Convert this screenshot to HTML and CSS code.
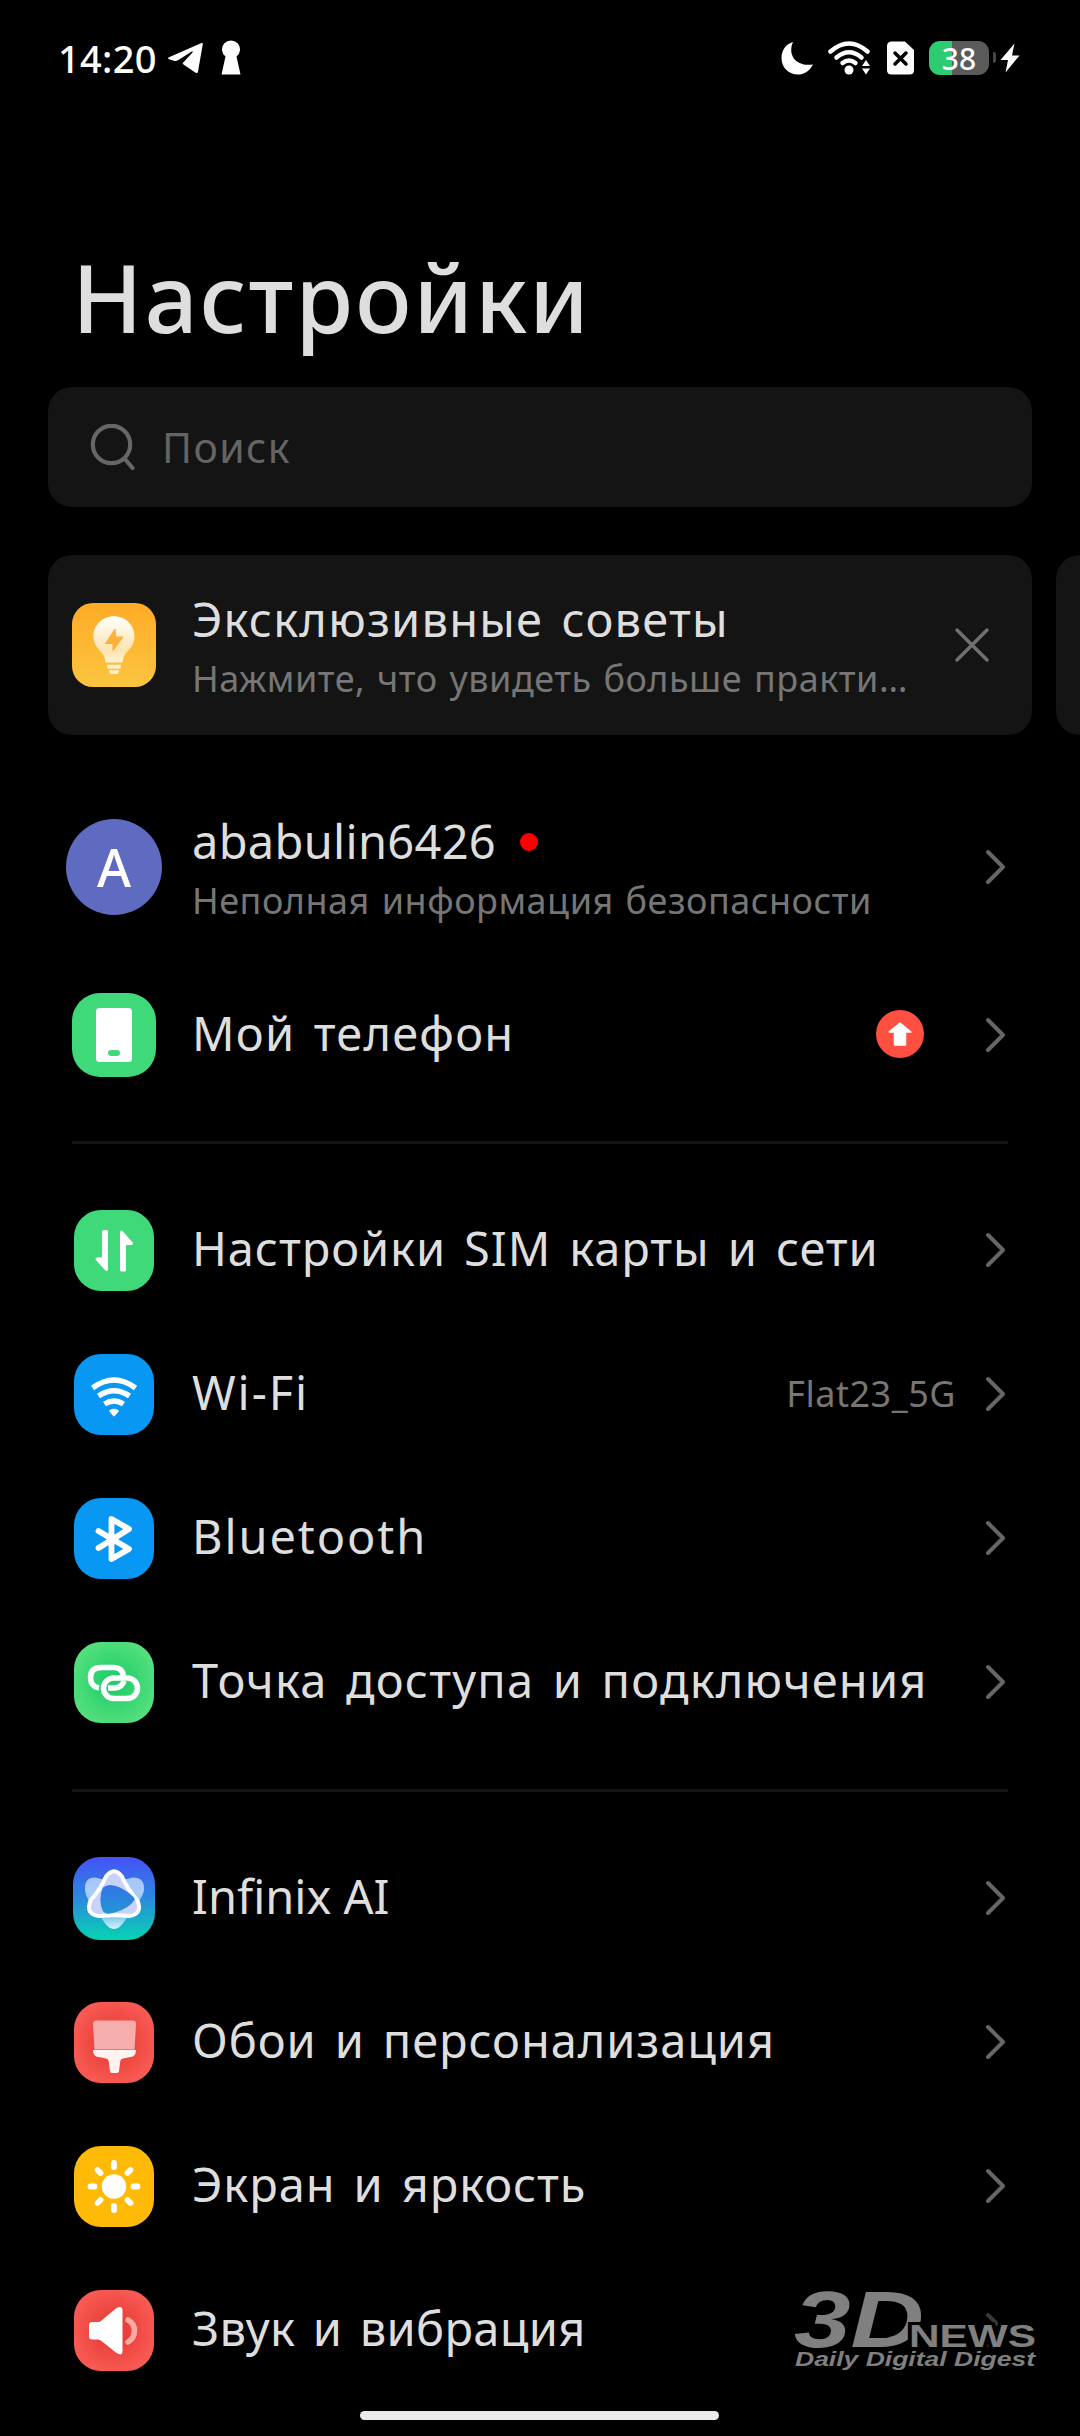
FILE: index.html
```html
<!doctype html>
<html lang="ru">
<head>
<meta charset="utf-8">
<meta name="viewport" content="width=device-width,user-scalable=no" />
<title>Настройки</title>
<link rel="stylesheet" href="styles.css">
</head>
<body>
<svg width="0" height="0" class="defs">
	<defs>
		<symbol id="arrow" viewBox="0 0 24 36"><path d="M4 3l15 15L4 33" fill="none" stroke="#666" stroke-width="4" stroke-linecap="round" stroke-linejoin="round"/></symbol>
		<linearGradient id="bulb" x1="0" y1="0" x2="0" y2="1"><stop offset="0" stop-color="#fff"/><stop offset=".75" stop-color="#fee3ad"/><stop offset="1" stop-color="#fff3d8"/></linearGradient>
		<linearGradient id="petal" x1="0" y1="0" x2="0" y2="1"><stop offset="0" stop-color="#a9c3fa"/><stop offset=".3" stop-color="#a8cdf6"/><stop offset=".75" stop-color="#7fc4ec"/><stop offset="1" stop-color="#d3f5f5"/></linearGradient>
		<linearGradient id="hole" x1="0" y1="0" x2="0" y2="1"><stop offset="0" stop-color="#3373e6"/><stop offset="1" stop-color="#2397d3"/></linearGradient>
	</defs>
</svg>
<div id="wrap">
	<div class="status">
		<span class="time">14:20</span>
		<svg class="tg" width="36" height="32" viewBox="0 0 36 32"><path d="M34.500 1C35.300.7 36 1.400 35.800 2.300L31 29.400C30.800 31 29.500 31.300 28.200 30.400L16.500 22.600C15.500 21.900 15.500 21.400 16.300 20.500L25.500 10.500C26.200 9.700 25.500 9 24.400 9.700L11 18.300C9.500 19.200 8.200 19.300 6.800 18.800L2 17.200C.8 16.700.7 15.800 2 15.200Z" fill="#fff"/></svg>
		<svg class="key" width="20" height="35" viewBox="0 0 20 35"><path d="M4.500 16.500A9 9 0 1 1 15.500 16.500L19.500 34.500H.5Z" fill="#fff"/></svg>
		<div class="status-right">
			<svg class="moon" width="33" height="34" viewBox="0 0 33 34"><path d="M12 1C6 15 16 26 32 23.500C28 31 22.500 33.500 17 33.500C7.500 33.500.5 26.500.5 17C.5 9 5 3 12 1Z" fill="#fff"/></svg>
			<svg class="net" width="43" height="34" viewBox="0 0 43 34"><g fill="none" stroke="#fff" stroke-width="4.500" stroke-linecap="round"><path d="M2.500 10.500Q21 -5.500 39.500 10.500"/><path d="M8.500 16.500Q21 6 33.500 16.500"/><path d="M14.500 22Q21 17 27.500 22"/></g><circle cx="21" cy="29" r="4.500" fill="#fff"/><path d="M34 25l4-6 4 6zM34 27.500l4 6 4-6z" fill="#fff"/></svg>
			<svg class="sim" width="27" height="34" viewBox="0 0 27 34"><path d="M5 .5H18L27 9V29Q27 33.500 22.500 33.500H4.500Q0 33.500 0 29V5Q0 .5 5 .5Z" fill="#fff"/><path d="M8 12l11 11M19 12l-11 11" stroke="#000" stroke-width="3.500" stroke-linecap="round"/></svg>
			<div class="battery">38</div>
			<i class="nub"></i>
			<svg class="bolt" width="20" height="30" viewBox="0 0 20 30"><path d="M14.500 0.500L.5 17H8L5.500 29.500L19.500 12.500H12Z" fill="#fff"/></svg>
		</div>
	</div>
	<h1>Настройки</h1>
	<div class="search">
		<svg width="46" height="46" viewBox="0 0 46 46"><g fill="none" stroke="#666" stroke-width="4.200" stroke-linecap="round"><circle cx="21.500" cy="20.500" r="18.700"/><path d="M35 35l7.500 9"/></g></svg>
		<span>Поиск</span>
	</div>
	<div class="tips">
		<div class="tip">
			<div class="pic">
				<div class="ico big orange"><svg viewBox="0 0 84 84"><path d="M42 13.200C53.500 13.200 62.500 22 62.500 33C62.500 41.500 58 46 54 50C51.500 53 51 56 50.500 59.500H33.500C33 56 32.500 53 30 50C26 46 21.500 41.500 21.500 33C21.500 22 30.500 13.200 42 13.200Z" fill="url(#bulb)"/><path d="M35 61.800H49L48.500 65.800H35.500ZM37 67.300H47L46 71H38Z" fill="#fff0cc"/><path d="M43 26L33.500 40.500H41V47.500L51 34H43.500Z" fill="#fcb038" stroke="#fcb038" stroke-linejoin="round"/></svg></div>
			</div>
			<div class="txt">
				<div class="name mid">Эксклюзивные советы</div>
				<div class="sub">Нажмите, что увидеть больше практи…</div>
			</div>
			<svg class="close" width="36" height="36" viewBox="0 0 36 36"><path d="M3 3l30 30M33 3L3 33" stroke="#707070" stroke-width="3.500" stroke-linecap="round"/></svg>
		</div>
		<div class="tip"></div>
	</div>

	<ul class="list first">
		<li class="account">
			<div class="pic"><div class="avatar">A</div></div>
			<div class="txt">
				<div class="name tight">ababulin6426<i class="dot"></i></div>
				<div class="sub">Неполная информация безопасности</div>
			</div>
			<svg class="arrow"><use href="#arrow"/></svg>
		</li>
		<li>
			<div class="pic"><div class="ico big green"><svg viewBox="0 0 84 84"><rect x="24" y="15" width="36" height="54" rx="3.500" fill="#fff"/><rect x="36" y="57" width="12" height="6" rx="3" fill="#40d97a"/></svg></div></div>
			<div class="name mid">Мой телефон</div>
			<svg class="update" width="48" height="48" viewBox="0 0 48 48"><circle cx="24" cy="24" r="24" fill="#ff4f41"/><path d="M24 13L35 22H29.500V35H18.500V22H13Z" fill="#fff" stroke="#fff" stroke-width="1.500" stroke-linejoin="round"/></svg>
			<svg class="arrow"><use href="#arrow"/></svg>
		</li>
	</ul>
	<ul class="list">
		<li>
			<div class="pic"><div class="ico green"><svg viewBox="0 0 80 80"><path d="M29.500 21H32.500V59L23 48.500H29.500ZM47.500 59.500H50.500V33H57.500L47.500 21.500Z" fill="#fff" stroke="#fff" stroke-width="3" stroke-linejoin="round"/></svg></div></div>
			<div class="name">Настройки SIM карты и сети</div>
			<svg class="arrow"><use href="#arrow"/></svg>
		</li>
		<li>
			<div class="pic"><div class="ico blue"><svg viewBox="0 0 80 80"><g fill="none" stroke="#fff" stroke-width="5.500"><path d="M18.500 33.500Q40 17.500 61.500 33.500"/><path d="M24.500 41.500Q40 31 55.500 41.500"/><path d="M30.500 49.500Q40 43.500 49.500 49.500"/></g><path d="M36.500 56.500Q40 54.500 43.500 56.500L40 60.500Z" fill="#fff" stroke="#fff" stroke-width="2.500" stroke-linejoin="round"/></svg></div></div>
			<div class="name wide">Wi-Fi</div>
			<div class="val">Flat23_5G</div>
			<svg class="arrow"><use href="#arrow"/></svg>
		</li>
		<li>
			<div class="pic"><div class="ico blue"><svg viewBox="0 0 80 80"><path d="M24.500 32.500L55 50.500L37.500 60.500V20.500L55 30.500L24.500 49.500" fill="none" stroke="#fff" stroke-width="5.800" stroke-linecap="round" stroke-linejoin="round"/></svg></div></div>
			<div class="name wide">Bluetooth</div>
			<svg class="arrow"><use href="#arrow"/></svg>
		</li>
		<li>
			<div class="pic"><div class="ico lime"><svg viewBox="0 0 80 80"><g fill="none" stroke="#fff" stroke-width="5.500"><path d="M49.500 33Q48 25 40 25H27Q16.500 25 16.500 35Q16.500 44 25 45.500"/><path d="M34 45.500H41Q48 45 50 38.500"/><rect x="29.500" y="35.500" width="34" height="20.500" rx="10.200"/></g></svg></div></div>
			<div class="name mid">Точка доступа и подключения</div>
			<svg class="arrow"><use href="#arrow"/></svg>
		</li>
	</ul>
	<ul class="list last">
		<li>
			<div class="pic"><div class="ico ai"><svg viewBox="0 0 82 82"><path d="M22 20Q41 26 60 20Q72 20 71 33Q69 42 60 50L52 63Q41 80 30 63L22 50Q13 42 12 33Q11 20 22 20Z" fill="url(#petal)"/><path d="M33 19Q41 8.500 49 19Q54 31 64.500 43Q70 57 56 58.500Q41 57 26 58.500Q12 57 17.500 43Q28 31 33 19Z" fill="#c8d2fb" stroke="#fff" stroke-width="4"/><path d="M30 30Q36 25 47 30Q60 37 62 42Q56 51 42 55Q32 58 29.500 53Q25 41 30 30Z" fill="url(#hole)"/></svg></div></div>
			<div class="name plain">Infinix AI</div>
			<svg class="arrow"><use href="#arrow"/></svg>
		</li>
		<li>
			<div class="pic"><div class="ico red"><svg viewBox="0 0 80 80"><path d="M22.500 18H58.500Q62.500 18 62 22L60.500 47H20.500L19 22Q18.500 18 22.500 18Z" fill="#f5aeab"/><path d="M19 47.500H62Q62 54 56.500 54.500L49 56Q46.500 56.500 46.200 59L45 68.500Q44.800 70.500 43 70.500H38Q36.200 70.500 36 68.500L34.800 59Q34.500 56.500 32 56L24.500 54.500Q19 54 19 47.500Z" fill="#fff3f2"/></svg></div></div>
			<div class="name">Обои и персонализация</div>
			<svg class="arrow"><use href="#arrow"/></svg>
		</li>
		<li>
			<div class="pic"><div class="ico yellow"><svg viewBox="0 0 80 80"><circle cx="40" cy="40" r="12.200" fill="#fff"/><path d="M40 16.500v4M40 59.500v4M16.500 40h4M59.500 40h4M23.500 23.500l3 3M53.500 53.500l3 3M23.500 56.500l3-3M53.500 26.500l3-3" stroke="#fff" stroke-width="5.800" stroke-linecap="round"/></svg></div></div>
			<div class="name">Экран и яркость</div>
			<svg class="arrow"><use href="#arrow"/></svg>
		</li>
		<li>
			<div class="pic"><div class="ico red"><svg viewBox="0 0 80 80"><path d="M18.500 31.500H24Q26 31.500 27.500 30L42.500 17.500Q48 14.500 48.500 19.500V61Q48 66 42.500 62.500L27.500 50.500Q26 49 24 49H18.500Q15 49 15 46V34.500Q15 31.500 18.500 31.500Z" fill="#fff"/><path d="M54 29.500Q60.500 33 60.500 40.300T54 51.500" fill="none" stroke="#f9a8a3" stroke-width="5.500" stroke-linecap="round"/></svg></div></div>
			<div class="name tight">Звук и вибрация</div>
			<svg class="arrow faded"><use href="#arrow"/></svg>
		</li>
	</ul>

	<svg class="mark" width="250" height="100" viewBox="0 0 250 100">
		<text class="mark-3d" x="0" y="68" textLength="130" lengthAdjust="spacingAndGlyphs">3D</text>
		<text class="mark-news" x="115" y="68" textLength="127" lengthAdjust="spacingAndGlyphs">NEWS</text>
		<text class="mark-sub" x="1" y="87" textLength="240" lengthAdjust="spacingAndGlyphs">Daily Digital Digest</text>
	</svg>
	<div class="homebar"></div>
</div>
</body>
</html>
```
FILE: styles.css
```css
body {
	margin: 0;
	background: #000;
	color: #dedede;
	font-family: "Noto Sans", sans-serif;
}
ul {
	margin: 0;
	padding: 0;
	list-style: none;
}
svg {
	display: block;
	flex-shrink: 0;
}
.defs {
	position: absolute;
}
#wrap {
	width: 1080px;
	height: 2436px;
	position: relative;
	overflow: hidden;
}

/* status bar */
.status {
	display: flex;
	align-items: center;
	height: 115px;
	padding: 0 60px 0 58px;
	color: #fff;
}
.time {
	width: 109px;
	font-size: 38px;
	font-weight: 500;
	line-height: 60px;
	letter-spacing: 0.3px;
}
.key {
	margin-left: 18px;
}
.status-right {
	display: flex;
	align-items: center;
	margin-left: auto;
}
.net {
	margin-left: 14px;
}
.sim {
	margin-left: 16px;
}
.battery {
	width: 60px;
	height: 34px;
	margin-left: 15px;
	border-radius: 11px;
	background: linear-gradient(90deg, #2ecc71 23px, #5a5a5a 23px);
	font-size: 30px;
	font-weight: 500;
	line-height: 35px;
	text-align: center;
}
.nub {
	width: 3px;
	height: 11px;
	margin: 0 4px;
	border-radius: 0 3px 3px 0;
	background: #4a4a4a;
}

h1 {
	margin: 127px 0 35px 72px;
	font-size: 94px;
	font-weight: 500;
	line-height: 110px;
	letter-spacing: 1.8px;
}
.search {
	display: flex;
	align-items: center;
	gap: 26px;
	height: 120px;
	margin: 0 48px;
	padding-left: 42px;
	box-sizing: border-box;
	border-radius: 24px;
	background: #141414;
	color: #646464;
	font-size: 41px;
	letter-spacing: 1.4px;
}
.search span {
	padding-bottom: 1px;
}
.tips {
	display: flex;
	gap: 24px;
	margin: 48px 0 36px 48px;
	overflow: hidden;
}
.tip {
	display: flex;
	align-items: center;
	flex: 0 0 984px;
	height: 180px;
	padding: 0 42px 0 18px;
	box-sizing: border-box;
	border-radius: 24px;
	background: #141414;
}
.close {
	margin-left: auto;
}

/* lists */
.list {
	padding: 34px 0;
	margin: 0 72px;
	border-top: 3px solid #141414;
}
.first {
	padding-top: 0;
	border-top: 0;
}
.last {
	margin-top: 1px;
}
.list li {
	display: flex;
	align-items: center;
	height: 144px;
	margin: 0 -6px;
}
.list .account {
	height: 192px;
}
.pic {
	display: flex;
	justify-content: center;
	flex: 0 0 96px;
	margin-right: 30px;
}
.name {
	padding-bottom: 5px;
	font-size: 47px;
	line-height: 60px;
	letter-spacing: 0.9px;
	word-spacing: 5px;
	white-space: nowrap;
}
.plain {
	letter-spacing: 0;
	word-spacing: 0;
}
.tight {
	letter-spacing: 0.3px;
}
.mid {
	letter-spacing: 1.2px;
}
.wide {
	letter-spacing: 1.9px;
}
.txt {
	padding-top: 2px;
}
.txt .name {
	padding-bottom: 0;
}
.sub {
	margin-top: 6px;
	line-height: 48px;
}
.sub, .val {
	color: #767676;
	font-size: 36px;
	letter-spacing: 0.5px;
	word-spacing: 2px;
	white-space: nowrap;
}
.val {
	margin-left: auto;
	padding-bottom: 1px;
}
.arrow {
	width: 24px;
	height: 36px;
	margin-left: auto;
	margin-right: 6px;
}
.val + .arrow {
	margin-left: 28px;
}
.update {
	margin-left: auto;
	margin-top: -2px;
}
.update + .arrow {
	margin-left: 60px;
}
.faded {
	opacity: 0.55;
}
.dot {
	display: inline-block;
	width: 18px;
	height: 18px;
	margin: 0 0 8px 24px;
	border-radius: 50%;
	background: #f00;
}
.avatar {
	width: 96px;
	height: 96px;
	border-radius: 50%;
	background: #5f6bc0;
	color: #fff;
	font-size: 52px;
	font-weight: 500;
	line-height: 96px;
	text-align: center;
}
.ico {
	width: 80px;
	height: 81px;
	border-radius: 27px;
}
.ico svg {
	width: 100%;
	height: 100%;
}
.big {
	width: 84px;
	height: 84px;
	border-radius: 28px;
}
.orange {
	border-radius: 21px;
	background: linear-gradient(#ffab26, #fbc540);
}
.green {
	background: #40d97a;
}
.lime {
	background: radial-gradient(#23cf6c 15%, #52df7c 75%);
}
.blue {
	background: #0897f3;
}
.ai {
	width: 82px;
	height: 83px;
	background: linear-gradient(#4552f8, #2b8add 50%, #06d4b2);
}
.red {
	background: radial-gradient(#e9413a 25%, #f85a53 75%);
}
.yellow {
	background: #ffba08;
}

.mark {
	position: absolute;
	left: 794px;
	top: 2279px;
	fill: #808080;
	font-family: "Liberation Sans", sans-serif;
	font-weight: bold;
}
.mark-3d {
	font-size: 80px;
	font-style: italic;
}
.mark-news {
	font-size: 32px;
	stroke: #000;
	stroke-width: 6px;
	paint-order: stroke;
}
.mark-sub {
	font-size: 20px;
	font-style: italic;
}
.homebar {
	position: absolute;
	left: 360px;
	bottom: 16px;
	width: 359px;
	height: 9px;
	border-radius: 5px;
	background: #ebebeb;
}
```
